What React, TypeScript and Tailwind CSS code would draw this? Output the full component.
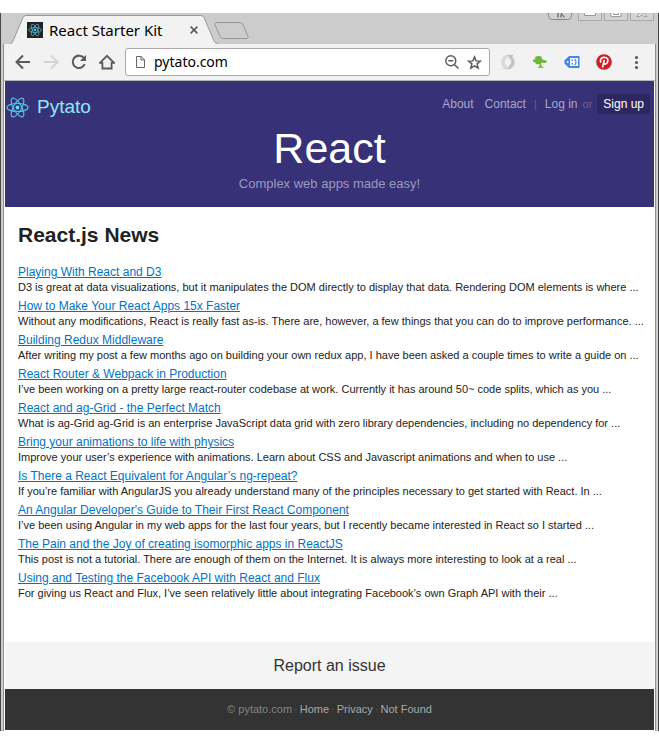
import React from "react";

const stories = [
  { title: "Playing With React and D3", text: "D3 is great at data visualizations, but it manipulates the DOM directly to display that data. Rendering DOM elements is where ..." },
  { title: "How to Make Your React Apps 15x Faster", text: "Without any modifications, React is really fast as-is. There are, however, a few things that you can do to improve performance. ..." },
  { title: "Building Redux Middleware", text: "After writing my post a few months ago on building your own redux app, I have been asked a couple times to write a guide on ..." },
  { title: "React Router & Webpack in Production", text: "I’ve been working on a pretty large react-router codebase at work. Currently it has around 50~ code splits, which as you ..." },
  { title: "React and ag-Grid - the Perfect Match", text: "What is ag-Grid ag-Grid is an enterprise JavaScript data grid with zero library dependencies, including no dependency for ..." },
  { title: "Bring your animations to life with physics", text: "Improve your user’s experience with animations. Learn about CSS and Javascript animations and when to use ..." },
  { title: "Is There a React Equivalent for Angular’s ng-repeat?", text: "If you’re familiar with AngularJS you already understand many of the principles necessary to get started with React. In ..." },
  { title: "An Angular Developer's Guide to Their First React Component", text: "I’ve been using Angular in my web apps for the last four years, but I recently became interested in React so I started ..." },
  { title: "The Pain and the Joy of creating isomorphic apps in ReactJS", text: "This post is not a tutorial. There are enough of them on the Internet. It is always more interesting to look at a real ..." },
  { title: "Using and Testing the Facebook API with React and Flux", text: "For giving us React and Flux, I’ve seen relatively little about integrating Facebook’s own Graph API with their ..." },
];

function ReactLogo({ className }: { className: string }) {
  return (
    <svg viewBox="0 0 24 24" className={className} fill="none" stroke="#55c3e0" strokeWidth="1.2" aria-hidden="true">
      <ellipse cx="12" cy="12" rx="11" ry="4.2" />
      <ellipse cx="12" cy="12" rx="11" ry="4.2" transform="rotate(60 12 12)" />
      <ellipse cx="12" cy="12" rx="11" ry="4.2" transform="rotate(120 12 12)" />
      <circle cx="12" cy="12" r="2" fill="#61dafb" stroke="none" />
    </svg>
  );
}

function WindowControls() {
  return (
    <div className="flex h-2 items-start gap-[2px] pr-1">
      <button aria-label="Profile" className="mr-1 h-2">
        <svg width="24" height="8" viewBox="0 0 24 8" fill="none">
          <path d="M.5 0v2.500q0 4 4 4h15q4 0 4-4V0" fill="#d2d2d2" stroke="#888" />
          <path d="M10 0v4.500M13 0l3.500 4.500M13 1.500v3" stroke="#444" />
        </svg>
      </button>
      <button aria-label="Minimize" className="h-2">
        <svg width="24" height="8" viewBox="0 0 24 8" fill="none">
          <path d="M.5 0v7.500h23V0" fill="#d2d2d2" stroke="#aaa" />
          <path d="M6.500 0v2.500h11V0" fill="#fff" stroke="#999" />
        </svg>
      </button>
      <button aria-label="Maximize" className="h-2">
        <svg width="24" height="8" viewBox="0 0 24 8" fill="none">
          <path d="M.5 0v7.500h23V0" fill="#d2d2d2" stroke="#aaa" />
          <path d="M7 0v3.500h10V0M9.500 0v1.500h5V0" fill="#fff" stroke="#999" />
        </svg>
      </button>
      <button aria-label="Close window" className="h-2">
        <svg width="24" height="8" viewBox="0 0 24 8" fill="none">
          <path d="M.5 0v7.500h23V0" fill="#d2d2d2" stroke="#aaa" />
          <path d="M7 3.500L10.500 0h3L17 3.500h-2.500L12 1.500 9.500 3.500z" fill="#fff" stroke="#999" />
        </svg>
      </button>
    </div>
  );
}

function TabStrip() {
  return (
    <div className="flex h-[31px] items-start justify-between bg-[#cccccc]">
      <div className="flex pt-[2px] pl-[9px]">
        <div className="relative h-[29px] w-[208px]">
          <svg className="absolute inset-0" width="208" height="29" viewBox="0 0 208 29" fill="none" aria-hidden="true">
            <path d="M0 29q2-.5 3-3L13 2.500Q14 .5 16 .5h175q2 0 3 2L204 26q1 2.500 4 3z" fill="#f2f2f2" />
            <path d="M0 28.500q2 0 3-2.500L13 2.500Q14 .5 16 .5h175q2 0 3 2L204 26q1 2.500 4 2.500" stroke="#999" />
          </svg>
          <div className="relative flex h-[29px] items-center pl-[17px]">
            <span className="flex size-4 shrink-0 items-center justify-center bg-[#222222]">
              <ReactLogo className="size-[14px]" />
            </span>
            <span className="ml-[6px] w-[138px] font-['Noto_Sans',sans-serif] text-[15px] leading-5 whitespace-nowrap text-black">React Starter Kit</span>
            <button aria-label="Close tab" className="flex size-[14px] items-center justify-center">
              <svg width="8" height="8" viewBox="0 0 8 8" stroke="#5a5a5a" strokeWidth="1.600">
                <path d="M.6.6l6.800 6.800M7.400.6L.6 7.400" />
              </svg>
            </button>
          </div>
        </div>
        <button aria-label="New tab" className="mt-[7px] -ml-1 h-[17px]">
          <svg width="35" height="17" viewBox="0 0 35 17" fill="#cccccc" stroke="#999">
            <path d="M3 .5h23q2 0 3 2l5 12q.5 2-1.500 2H9q-2 0-3-2L1 2.500Q.5.5 3 .5z" />
          </svg>
        </button>
      </div>
      <WindowControls />
    </div>
  );
}

function Toolbar() {
  return (
    <div className="flex h-[37px] items-center border-b border-[#b5b5b5] bg-[#f2f2f2] pr-[11px] pl-[11px]">
      <div className="flex items-center gap-3">
        <button aria-label="Back">
          <svg width="16" height="16" viewBox="0 0 16 16" fill="none" stroke="#5a5a5a" strokeWidth="2">
            <path d="M15 8H2M8 1.500L1.500 8 8 14.500" />
          </svg>
        </button>
        <button aria-label="Forward">
          <svg width="16" height="16" viewBox="0 0 16 16" fill="none" stroke="#d4d4d4" strokeWidth="2">
            <path d="M1 8h13M8 1.500L14.500 8 8 14.500" />
          </svg>
        </button>
        <button aria-label="Reload">
          <svg width="16" height="16" viewBox="0 0 16 16" fill="none">
            <path d="M13 4.200A6.200 6.200 0 1 0 13.700 10.200" stroke="#5a5a5a" strokeWidth="2" />
            <path d="M15 1v6H9z" fill="#5a5a5a" />
          </svg>
        </button>
        <button aria-label="Home">
          <svg width="16" height="16" viewBox="0 0 16 16" fill="none" stroke="#5a5a5a" strokeWidth="1.800">
            <path d="M1 8.800L8 1.800 15 8.800H12.600v5.700H3.400V8.800z" />
          </svg>
        </button>
      </div>
      <div className="ml-[10px] flex h-7 min-w-0 flex-1 items-center rounded-[3px] border border-[#a9a9a9] bg-white pr-[7px] pl-[10px]">
        <svg width="9" height="12" viewBox="0 0 9 12" fill="none" stroke="#666" aria-hidden="true">
          <path d="M.5.5h4.700L8.500 3.800v7.700h-8zM5 .5V4h3.500" />
        </svg>
        <input
          aria-label="Address"
          defaultValue="pytato.com"
          className="ml-[9px] min-w-0 flex-1 bg-transparent font-['Noto_Sans',sans-serif] text-[14px] leading-5 text-black outline-none"
        />
        <button aria-label="Zoom">
          <svg width="14" height="14" viewBox="0 0 14 14" fill="none" stroke="#5a5a5a" strokeWidth="1.400">
            <circle cx="5.800" cy="5.800" r="5" />
            <path d="M3.300 5.800h5M9.400 9.400l4 4" />
          </svg>
        </button>
        <button aria-label="Bookmark this page" className="ml-2">
          <svg width="15" height="15" viewBox="0 0 15 15" fill="none" stroke="#5a5a5a" strokeWidth="1.500">
            <path d="M7.500 2l1.600 3.900 4.300.3-3.300 2.700 1.100 4.200-3.700-2.300-3.700 2.300 1.100-4.200L1.600 6.200l4.300-.3z" />
          </svg>
        </button>
      </div>
      <div className="ml-[10px] flex items-center gap-4">
        <button aria-label="Refresh extension">
          <svg width="16" height="16" viewBox="0 0 16 16" fill="none">
            <path d="M9.500 1A7 7 0 0 0 3.500 13L2.500 15.200h6L6.800 11.800A4 4 0 0 1 6 5.500Q7 3 9.500 1z" fill="#d9d9d9" />
            <path d="M6.500 15A7 7 0 0 0 12.500 3L13.500.8h-6L9.200 4.200A4 4 0 0 1 10 10.500Q9 13 6.500 15z" fill="#c4c4c4" />
          </svg>
        </button>
        <button aria-label="Tree extension">
          <svg width="16" height="16" viewBox="0 0 16 16" fill="#6fb536">
            <ellipse cx="6.500" cy="4" rx="3.500" ry="2" />
            <ellipse cx="4" cy="6.700" rx="3" ry="1.800" />
            <ellipse cx="8.500" cy="6.500" rx="3" ry="1.800" />
            <ellipse cx="12" cy="7.500" rx="2.800" ry="1.500" />
            <ellipse cx="6" cy="9" rx="2.500" ry="1.200" />
            <path d="M8 7h1.800L9 10l.8 2.200 2.400 1.600H5.500L7.500 12z" />
          </svg>
        </button>
        <button aria-label="Tag extension">
          <svg width="16" height="16" viewBox="0 0 16 16" fill="none">
            <path d="M5 2h10.500v12H5L.5 9.500v-3z" fill="#4285f4" />
            <path d="M6 4h8v8H6z" fill="#fff" />
            <path d="M7.500 5.500H9V7H7.500zM7.500 9H9v1.500H7.500z" fill="#4285f4" />
            <path d="M10.700 4.800q2.600 3.200 0 6.400" stroke="#4285f4" strokeWidth="1.200" />
            <circle cx="3.700" cy="8" r=".9" fill="#fff" />
          </svg>
        </button>
        <button aria-label="Pinterest">
          <svg width="16" height="16" viewBox="0 0 16 16" fill="none">
            <circle cx="8" cy="8" r="7.800" fill="#cb2027" />
            <path d="M6.500 13.500L8.300 6M5 8.500C3.500 6 5 3.500 8 3.300c3.400 0 4.600 2.200 3.600 4.700-.8 2.200-3 2.700-4 1.300" stroke="#fff" strokeWidth="1.600" />
          </svg>
        </button>
        <button aria-label="Menu">
          <svg width="16" height="16" viewBox="0 0 16 16" fill="#5a5a5a">
            <circle cx="8.500" cy="3.500" r="1.600" />
            <circle cx="8.500" cy="8.500" r="1.600" />
            <circle cx="8.500" cy="13.500" r="1.600" />
          </svg>
        </button>
      </div>
    </div>
  );
}

function SiteHeader() {
  return (
    <header className="bg-[#373277] px-px pt-[13px] pb-[13px]">
      <div className="flex items-start justify-between">
        <a href="#home" className="mt-px flex items-center text-[19px] leading-6 text-[#92e5fc]">
          <ReactLogo className="mr-2 size-[23px]" />
          Pytato
        </a>
        <nav className="flex items-center pr-[3px] text-[12px] leading-5 text-[#a9a6c6]">
          <a href="#about">About</a>
          <a href="#contact" className="ml-[11px]">Contact</a>
          <span className="mx-2 text-[11px] text-[#656192]">|</span>
          <a href="#login">Log in</a>
          <span className="mx-[5px] text-[11px] text-[#656192]">or</span>
          <a href="#signup" className="rounded-[3px] bg-[#2c285f] px-[6px] text-white">Sign up</a>
        </nav>
      </div>
      <h1 className="mt-[3px] text-center text-[43px] leading-[52px] text-white">React</h1>
      <p className="text-center text-[13px] leading-5 text-[#9b98bb]">Complex web apps made easy!</p>
    </header>
  );
}

export default function App() {
  return (
    <div className="min-h-screen bg-white py-[13px] font-['Liberation_Sans',Arial,sans-serif]">
      <div className="border-x border-[#474747]">
        <TabStrip />
        <div className="border-x-2 border-[#cccccc]">
          <div className="border-x border-[#8f8f8f] pb-px">
            <Toolbar />
            <div className="px-px">
              <SiteHeader />
              <main className="bg-white px-[13px] pt-[14px] pb-[38px]">
                <h2 className="mb-[15px] text-[21px] leading-7 font-bold text-[#222222]">React.js News</h2>
                <ul>
                  {stories.map((s) => (
                    <li key={s.title} className="whitespace-nowrap">
                      <a href="#story" className="block w-fit text-[12px] leading-4 text-[#0074c2] underline">{s.title}</a>
                      <p className="pb-1 text-[11px] leading-[14px] text-[#222222]">{s.text}</p>
                    </li>
                  ))}
                </ul>
              </main>
              <section className="bg-[#f4f4f4] py-3 text-center text-[16px] leading-[23px]">
                <a href="#issue" className="text-[#333333]">Report an issue</a>
              </section>
              <footer className="flex items-center justify-center gap-[2px] bg-[#333333] py-3 text-[11px] leading-[17px] text-[#a9a9a9]">
                <span className="text-[#858585]">© pytato.com</span>
                <span className="text-[#666666]">·</span>
                <a href="#home">Home</a>
                <span className="text-[#666666]">·</span>
                <a href="#privacy">Privacy</a>
                <span className="text-[#666666]">·</span>
                <a href="#not-found">Not Found</a>
              </footer>
            </div>
          </div>
        </div>
      </div>
    </div>
  );
}
